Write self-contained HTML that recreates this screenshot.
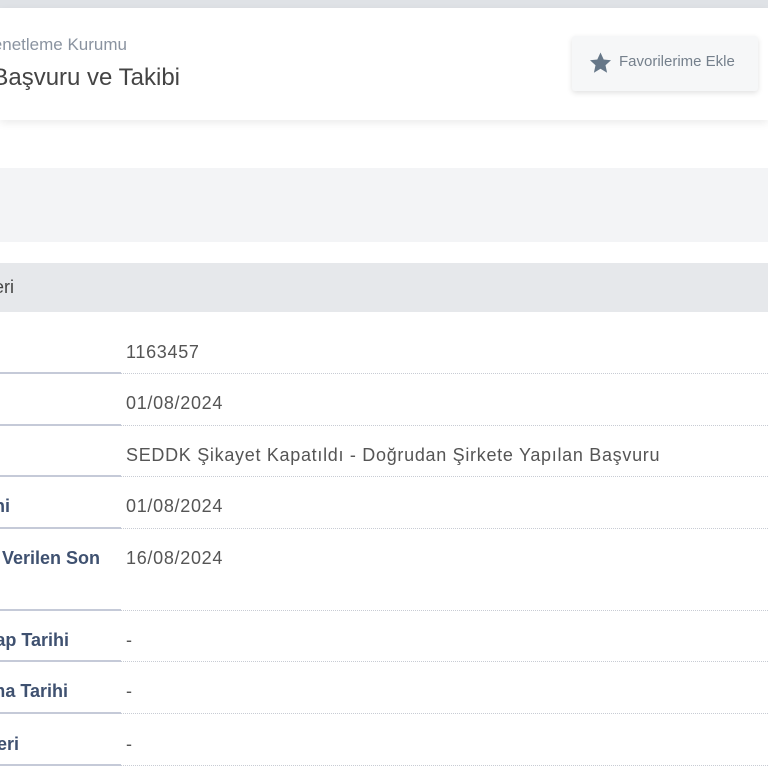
<!DOCTYPE html>
<html><head><meta charset="utf-8"><style>
*{margin:0;padding:0;box-sizing:border-box}
html,body{width:768px;height:768px;overflow:hidden;background:#fff}
body{font-family:"Liberation Sans",sans-serif;position:relative}
#w{position:absolute;left:0;top:0;width:768px;height:768px;overflow:hidden}
.a{position:absolute;white-space:nowrap}
.r{text-align:right}
.lab{color:#3f5170;font-weight:bold;font-size:18px}
.val{color:#555;font-size:18px;letter-spacing:0.7px;left:126px}
.ls{position:absolute;left:0;width:121px;height:2px;background:#c5cad8}
.ld{position:absolute;left:121px;right:0;height:0;border-top:1px dotted #c8ccd4}
</style></head><body><div id="w">
<div class="a" style="left:0;top:0;width:768px;height:8px;background:#dfe2e6"></div>
<div class="a" style="left:0;top:8px;width:768px;height:112px;background:#fff;box-shadow:0 3px 8px rgba(0,0,0,0.08)"></div>
<div class="a r" style="right:641px;top:35px;font-size:17px;color:#8a93a0">Denetleme Kurumu</div>
<div class="a r" style="right:588px;top:64px;font-size:24px;color:#444">Başvuru ve Takibi</div>
<div class="a" style="left:572px;top:36px;width:186px;height:55px;background:#f6f7f8;border-radius:3px;box-shadow:0 2px 6px rgba(0,0,0,0.12)"></div>
<svg class="a" style="left:588px;top:51px" width="25" height="24" viewBox="0 0 24 24"><path d="M12 1.5l3.2 7 7.3.7-5.5 5 1.6 7.5L12 17.8l-6.6 3.9L7 14.2l-5.5-5 7.3-.7z" fill="#667788"/></svg>
<div class="a" style="left:619px;top:53px;font-size:15px;color:#75808c">Favorilerime Ekle</div>
<div class="a" style="left:0;top:168px;width:768px;height:74px;background:#f3f4f6"></div>
<div class="a" style="left:0;top:263px;width:768px;height:49px;background:#e6e8eb"></div>
<div class="a r" style="right:754px;top:277px;font-size:18px;color:#444">Bilgileri</div>

<div class="a val" style="top:342px">1163457</div>
<div class="ls" style="top:372px"></div><div class="ld" style="top:373px"></div>
<div class="a val" style="top:393px">01/08/2024</div>
<div class="ls" style="top:424px"></div><div class="ld" style="top:425px"></div>
<div class="a val" style="top:445px">SEDDK Şikayet Kapatıldı - Doğrudan Şirkete Yapılan Başvuru</div>
<div class="ls" style="top:475px"></div><div class="ld" style="top:476px"></div>
<div class="a lab r" style="right:758px;top:496px">Tarihi</div>
<div class="a val" style="top:496px">01/08/2024</div>
<div class="ls" style="top:527px"></div><div class="ld" style="top:528px"></div>
<div class="a lab r" style="right:668px;top:548px">Verilen Son</div>
<div class="a val" style="top:548px">16/08/2024</div>
<div class="ls" style="top:609px"></div><div class="ld" style="top:610px"></div>
<div class="a lab r" style="right:699px;top:630px">Cevap Tarihi</div>
<div class="a val" style="top:630px">-</div>
<div class="ls" style="top:660px"></div><div class="ld" style="top:661px"></div>
<div class="a lab r" style="right:700px;top:681px">Kapatılma Tarihi</div>
<div class="a val" style="top:681px">-</div>
<div class="ls" style="top:712px"></div><div class="ld" style="top:713px"></div>
<div class="a lab r" style="right:749px;top:734px">Bilgileri</div>
<div class="a val" style="top:734px">-</div>
<div class="ls" style="top:764px"></div><div class="ld" style="top:765px"></div>
</div></body></html>
